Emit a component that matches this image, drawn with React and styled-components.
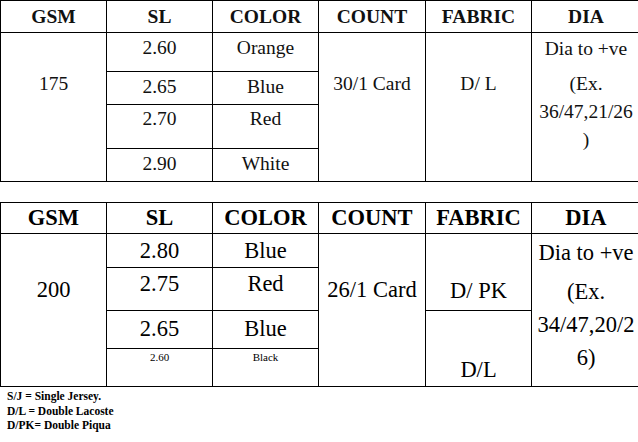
import React from "react";
import styled, { createGlobalStyle } from "styled-components";

/* ================= STYLES ================= */

const serif = `"Liberation Serif", "Times New Roman", Times, serif`;

const GlobalStyle = createGlobalStyle`
  html, body {
    margin: 0;
    padding: 0;
    background: #ffffff;
    overflow: hidden;
  }
  body {
    font-family: ${serif};
    color: #000;
  }
`;

const Sheet = styled.div`
  width: 638px;
  height: 442px;
  overflow: hidden;
  display: flex;
  flex-direction: column;
  font-family: ${serif};
`;

const SpecTable = styled.table`
  width: 640px;
  table-layout: fixed;
  border-collapse: collapse;
  margin-top: ${(p) => p.$mt || 0}px;
  font-family: ${serif};
  font-size: ${(p) => p.$size}px;
  color: ${(p) => p.$color || "#000"};
`;

const Row = styled.tr`
  height: ${(p) => p.$h}px;
`;

const HeadCell = styled.th`
  border: 1.5px solid #000;
  font-family: ${serif};
  font-weight: 700;
  text-align: center;
  vertical-align: middle;
  padding: 0;
  line-height: 1;
`;

const Cell = styled.td`
  border: 1.5px solid #000;
  font-family: ${serif};
  text-align: center;
  vertical-align: top;
  padding: ${(p) => p.$pt || 0}px 0 0;
  font-size: ${(p) => (p.$small ? "11px" : "inherit")};
  line-height: ${(p) => (p.$small ? "13px" : "1.15")};
`;

const DiaLine = styled.div`
  line-height: ${(p) => p.$lh}px;
  margin-top: ${(p) => p.$mt || 0}px;
`;

const Legend = styled.div`
  padding: 2px 0 0 7px;
  font-family: ${serif};
  font-size: 11.5px;
  font-weight: 700;
  line-height: 14.5px;
  color: #000;
`;

/* ================= DATA ================= */

const cols = [106, 106, 106, 107, 106, 109];
const heads = ["GSM", "SL", "COLOR", "COUNT", "FABRIC", "DIA"];

const Cols = () => (
  <colgroup>
    {cols.map((w, i) => (
      <col key={i} style={{ width: w }} />
    ))}
  </colgroup>
);

const Head = ({ h }) => (
  <thead>
    <Row $h={h}>
      {heads.map((t) => (
        <HeadCell key={t}>{t}</HeadCell>
      ))}
    </Row>
  </thead>
);

/* ================= COMPONENT ================= */

export default function App() {
  return (
    <Sheet>
      <GlobalStyle />

      <SpecTable $size={19.5} $color="#111">
        <Cols />
        <Head h={32} />
        <tbody>
          <Row $h={39}>
            <Cell rowSpan={4} $pt={40}>175</Cell>
            <Cell $pt={4}>2.60</Cell>
            <Cell $pt={4}>Orange</Cell>
            <Cell rowSpan={4} $pt={40}>30/1 Card</Cell>
            <Cell rowSpan={4} $pt={40}>D/ L</Cell>
            <Cell rowSpan={4} $pt={5}>
              <DiaLine $lh={22}>Dia to +ve</DiaLine>
              <DiaLine $lh={28} $mt={10}>
                (Ex.
                <br />
                36/47,21/26
                <br />)
              </DiaLine>
            </Cell>
          </Row>
          <Row $h={33}>
            <Cell $pt={4}>2.65</Cell>
            <Cell $pt={4}>Blue</Cell>
          </Row>
          <Row $h={44}>
            <Cell $pt={3}>2.70</Cell>
            <Cell $pt={3}>Red</Cell>
          </Row>
          <Row $h={33}>
            <Cell $pt={4}>2.90</Cell>
            <Cell $pt={4}>White</Cell>
          </Row>
        </tbody>
      </SpecTable>

      <SpecTable $size={22.5} $mt={20}>
        <Cols />
        <Head h={31} />
        <tbody>
          <Row $h={34}>
            <Cell rowSpan={4} $pt={43}>200</Cell>
            <Cell $pt={4}>2.80</Cell>
            <Cell $pt={4}>Blue</Cell>
            <Cell rowSpan={4} $pt={43}>26/1 Card</Cell>
            <Cell rowSpan={2} $pt={44}>D/ PK</Cell>
            <Cell rowSpan={4} $pt={6}>
              <DiaLine $lh={26}>Dia to +ve</DiaLine>
              <DiaLine $lh={33} $mt={9}>
                (Ex.
                <br />
                34/47,20/2
                <br />
                6)
              </DiaLine>
            </Cell>
          </Row>
          <Row $h={43}>
            <Cell $pt={3}>2.75</Cell>
            <Cell $pt={3}>Red</Cell>
          </Row>
          <Row $h={38}>
            <Cell $pt={5}>2.65</Cell>
            <Cell $pt={5}>Blue</Cell>
            <Cell rowSpan={2} $pt={46}>D/L</Cell>
          </Row>
          <Row $h={38}>
            <Cell $small $pt={2}>2.60</Cell>
            <Cell $small $pt={2}>Black</Cell>
          </Row>
        </tbody>
      </SpecTable>

      <Legend>
        <div>S/J = Single Jersey.</div>
        <div>D/L = Double Lacoste</div>
        <div>D/PK= Double Piqua</div>
      </Legend>
    </Sheet>
  );
}
